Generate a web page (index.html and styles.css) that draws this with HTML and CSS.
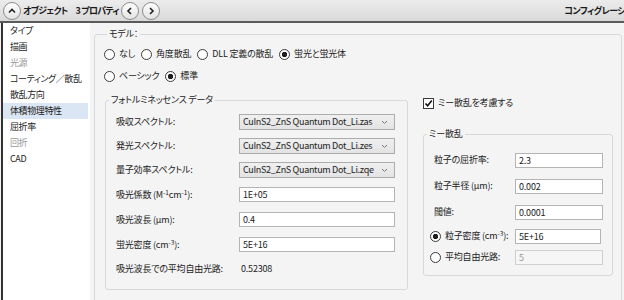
FILE: index.html
```html
<!DOCTYPE html>
<html lang="ja">
<head>
    <meta charset="UTF-8">
    <meta name="viewport" content="width=device-width, initial-scale=1.0">
    <title>オブジェクト 3 プロパティ</title>
    <link rel="stylesheet" href="styles.css">
</head>
<body>
    <!-- タイトルバー -->
    <div class="titlebar">
        <span class="round-btn">
            <svg width="10" height="10" viewBox="0 0 10 10"><path d="M2 6.5 L5 3.5 L8 6.5" fill="none" stroke="#222" stroke-width="1.6"/></svg>
        </span>
        <span class="title">オブジェクト　3 プロパティ</span>
        <span class="round-btn">
            <svg width="10" height="10" viewBox="0 0 10 10"><path d="M6 2 L3 5 L6 8" fill="none" stroke="#222" stroke-width="1.6"/></svg>
        </span>
        <span class="round-btn">
            <svg width="10" height="10" viewBox="0 0 10 10"><path d="M4 2 L7 5 L4 8" fill="none" stroke="#222" stroke-width="1.6"/></svg>
        </span>
        <span class="spacer"></span>
        <span class="config">コンフィグレーシ</span>
    </div>

    <div class="frame">
        <!-- 左のカテゴリ一覧 -->
        <ul class="nav">
            <li>タイプ</li>
            <li>描画</li>
            <li class="off">光源</li>
            <li>コーティング／散乱</li>
            <li>散乱方向</li>
            <li class="active">体積物理特性</li>
            <li>屈折率</li>
            <li class="off">回折</li>
            <li>CAD</li>
        </ul>

        <div class="main">
            <fieldset class="group model">
                <legend>モデル：</legend>
                <div class="radio-row">
                    <label class="opt"><span class="radio"></span>なし</label>
                    <label class="opt"><span class="radio"></span>角度散乱</label>
                    <label class="opt"><span class="radio"></span>DLL 定義の散乱</label>
                    <label class="opt"><span class="radio on"></span>蛍光と蛍光体</label>
                </div>
                <div class="radio-row second">
                    <label class="opt"><span class="radio"></span>ベーシック</label>
                    <label class="opt"><span class="radio on"></span>標準</label>
                </div>

                <div class="split">
                    <fieldset class="group pl">
                        <legend>フォトルミネッセンス データ</legend>
                        <div class="form">
                            <div class="row">
                                <span class="label">吸収スペクトル:</span>
                                <span class="select">CuInS2_ZnS Quantum Dot_Li.zas<svg width="7" height="5" viewBox="0 0 7 5"><path d="M1 1 L3.5 3.5 L6 1" fill="none" stroke="#777" stroke-width="1"/></svg></span>
                            </div>
                            <div class="row">
                                <span class="label">発光スペクトル:</span>
                                <span class="select">CuInS2_ZnS Quantum Dot_Li.zes<svg width="7" height="5" viewBox="0 0 7 5"><path d="M1 1 L3.5 3.5 L6 1" fill="none" stroke="#777" stroke-width="1"/></svg></span>
                            </div>
                            <div class="row">
                                <span class="label">量子効率スペクトル:</span>
                                <span class="select">CuInS2_ZnS Quantum Dot_Li.zqe<svg width="7" height="5" viewBox="0 0 7 5"><path d="M1 1 L3.5 3.5 L6 1" fill="none" stroke="#777" stroke-width="1"/></svg></span>
                            </div>
                            <div class="row tall">
                                <span class="label">吸光係数 (M<sup>-1</sup>cm<sup>-1</sup>):</span>
                                <span class="field">1E+05</span>
                            </div>
                            <div class="row tall">
                                <span class="label">吸光波長 (µm):</span>
                                <span class="field">0.4</span>
                            </div>
                            <div class="row tall">
                                <span class="label">蛍光密度 (cm<sup>-3</sup>):</span>
                                <span class="field">5E+16</span>
                            </div>
                            <div class="row">
                                <span class="label">吸光波長での平均自由光路:</span>
                                <span class="value">0.52308</span>
                            </div>
                        </div>
                    </fieldset>

                    <div class="side">
                        <label class="check-row">
                            <span class="check">
                                <svg width="9" height="9" viewBox="0 0 9 9"><path d="M1.5 4.5 L3.6 6.8 L7.8 1.6" fill="none" stroke="#111" stroke-width="1.6"/></svg>
                            </span>
                            ミー散乱を考慮する
                        </label>

                        <fieldset class="group mie">
                            <legend>ミー散乱</legend>
                            <div class="mie-form">
                                <div class="mrow r1">
                                    <span class="label">粒子の屈折率:</span>
                                    <span class="field">2.3</span>
                                </div>
                                <div class="mrow r2">
                                    <span class="label">粒子半径 (µm):</span>
                                    <span class="field">0.002</span>
                                </div>
                                <div class="mrow r3">
                                    <span class="label">閾値:</span>
                                    <span class="field">0.0001</span>
                                </div>
                                <div class="mrow r4">
                                    <span class="label opt-label"><span class="radio on"></span><span>粒子密度 (cm<sup>-3</sup>):</span></span>
                                    <span class="field short">5E+16</span>
                                </div>
                                <div class="mrow r5">
                                    <span class="label opt-label"><span class="radio"></span><span>平均自由光路:</span></span>
                                    <span class="field disabled">5</span>
                                </div>
                            </div>
                        </fieldset>
                    </div>
                </div>
            </fieldset>
        </div>
    </div>
</body>
</html>
```

FILE: styles.css
```css
body {
    margin: 0;
    width: 624px;
    height: 300px;
    overflow: hidden;
    font-family: "Noto Sans CJK JP", "Noto Sans", sans-serif;
    font-size: 9px;
    line-height: 14px;
    letter-spacing: -0.2px;
    font-feature-settings: "palt";
    color: #222;
    background: #f2f2f2;
}

/* タイトルバー */

.titlebar {
    height: 21px;
    display: flex;
    align-items: center;
    padding-left: 3px;
    background: linear-gradient(#ececec, #d9d9d9);
    border-bottom: 2px solid #5a5a5a;
    overflow: hidden;
}

.round-btn {
    width: 16px;
    height: 16px;
    border: 1px solid #8c8c8c;
    border-radius: 50%;
    background: linear-gradient(#fdfdfd, #e4e4e4);
    display: flex;
    align-items: center;
    justify-content: center;
    flex-shrink: 0;
}

.round-btn + .round-btn {
    margin-left: 3px;
}

.title {
    margin: 0 2px;
    font-weight: bold;
    white-space: nowrap;
    letter-spacing: -0.8px;
    color: #1a1a1a;
}

.spacer {
    flex: 1;
}

.config {
    margin-right: -1px;
    white-space: nowrap;
    font-weight: bold;
    letter-spacing: -0.6px;
    color: #1a1a1a;
}

/* 本体 */

.frame {
    display: flex;
    height: 277px;
    overflow: hidden;
}

.nav {
    list-style: none;
    margin: 0 0 0 1px;
    padding: 0 2px 0 0;
    width: 85px;
    background: #fff;
    border-left: 2px solid #333;
}

.nav li {
    height: 16px;
    line-height: 16px;
    padding-left: 7px;
    white-space: nowrap;
    letter-spacing: -0.4px;
}

.nav li.off {
    color: #9a9a9a;
}

.nav li.active {
    background: #dbe6f4;
}

.main {
    flex: 1;
    padding: 4px 2px 0 4px;
    background: #f4f4f4;
}

.group {
    margin: 0;
    border: 1px solid #d6d9dc;
    border-radius: 3px;
    padding: 0;
    min-width: 0;
}

.group legend {
    padding: 0 2px;
    margin-left: 3px;
    line-height: 14px;
}

.model {
    height: 290px;
    padding: 6px 0 0 9px;
}

.radio-row {
    display: flex;
    height: 14px;
    align-items: center;
    gap: 6px;
}

.radio-row.second {
    margin-top: 8px;
}

.opt {
    display: flex;
    align-items: center;
    gap: 4px;
    white-space: nowrap;
}

.radio {
    width: 9px;
    height: 9px;
    border: 1px solid #3a3a3a;
    border-radius: 50%;
    background: #fff;
    flex-shrink: 0;
}

.radio.on {
    background: radial-gradient(circle, #1e1e1e 0 2.4px, #fff 3px);
}

.split {
    display: flex;
    align-items: flex-start;
    margin-top: 10px;
    margin-left: 1px;
}

/* フォトルミネッセンス */

.pl {
    width: 303px;
    height: 197px;
    box-sizing: border-box;
}

.form {
    padding: 3px 0 0 10px;
}

.row {
    display: grid;
    grid-template-columns: 123px 156px;
    align-items: center;
    height: 24px;
}

.row.tall {
    height: 25px;
}

.label {
    white-space: nowrap;
}

sup {
    font-size: 6.5px;
    line-height: 0;
    vertical-align: 3px;
    letter-spacing: 0;
}

.select {
    height: 16px;
    box-sizing: border-box;
    border: 1px solid #acacac;
    background: linear-gradient(#f0f0f0, #e3e3e3);
    display: flex;
    align-items: center;
    justify-content: space-between;
    padding: 0 6px 0 3px;
    white-space: nowrap;
    letter-spacing: -0.3px;
}

.field {
    height: 15px;
    box-sizing: border-box;
    border: 1px solid #b4b4b4;
    background: #fff;
    padding-left: 3px;
    line-height: 13px;
    white-space: nowrap;
}

.value {
    padding-left: 2px;
}

/* ミー散乱 */

.side {
    margin-left: 15px;
    width: 190px;
}

.check-row {
    display: flex;
    align-items: center;
    gap: 4px;
    height: 14px;
    margin-top: 3px;
}

.check {
    width: 9px;
    height: 9px;
    border: 1px solid #3a3a3a;
    background: #fff;
    display: flex;
    align-items: center;
    justify-content: center;
}

.mie {
    margin-top: 17px;
    height: 149px;
    box-sizing: border-box;
}

.mie-form {
    padding: 6px 0 0 10px;
}

.mrow {
    display: grid;
    grid-template-columns: 81px 88px;
    align-items: center;
}

.mrow.r1,
.mrow.r2,
.mrow.r3 {
    height: 26px;
}

.mrow.r4 {
    height: 22px;
}

.mrow.r5 {
    height: 20px;
}

.opt-label {
    display: flex;
    align-items: center;
    gap: 4px;
    margin-left: -4px;
}

.field.short {
    width: 86px;
}

.field.disabled {
    background: #f6f6f6;
    border-color: #d0d0d0;
    color: #9a9a9a;
}
```
